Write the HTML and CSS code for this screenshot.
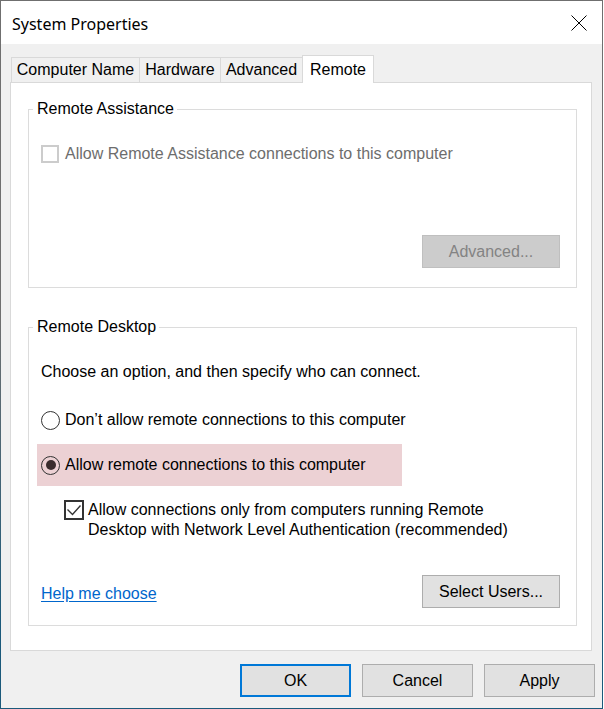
FILE: index.html
```html
<!DOCTYPE html>
<html lang="en">
<head>
<meta charset="utf-8">
<title>System Properties</title>
<link rel="stylesheet" href="styles.css">
</head>
<body>
<div class="window">
  <div class="titlebar">
    <span class="title">System Properties</span>
    <svg class="close" width="16" height="16" viewBox="0 0 16 16" aria-label="Close">
      <path d="M0.5 0.5 L15.5 15.5 M15.5 0.5 L0.5 15.5" stroke="#000" stroke-width="1" fill="none"/>
    </svg>
  </div>
  <div class="content">
    <div class="tabs">
      <div class="tab tab-name">Computer Name</div>
      <div class="tab tab-hw">Hardware</div>
      <div class="tab tab-adv">Advanced</div>
      <div class="tab tab-remote active">Remote</div>
    </div>
    <div class="panel">
      <fieldset class="group">
        <legend>Remote Assistance</legend>
        <div class="group-body assist-body">
          <div class="option disabled">
            <span class="checkbox"></span>
            <span>Allow Remote Assistance connections to this computer</span>
          </div>
          <div class="button-row advanced-row">
            <button class="btn btn-disabled" type="button">Advanced...</button>
          </div>
        </div>
      </fieldset>
      <fieldset class="group group-desktop">
        <legend>Remote Desktop</legend>
        <div class="group-body desktop-body">
          <div class="intro">Choose an option, and then specify who can connect.</div>
          <div class="option radio-row">
            <span class="radio"></span>
            <span>Don’t allow remote connections to this computer</span>
          </div>
          <div class="highlight">
            <div class="option">
              <span class="radio checked"></span>
              <span>Allow remote connections to this computer</span>
            </div>
          </div>
          <div class="option nla">
            <svg class="check" width="20" height="20" viewBox="0 0 20 20">
              <rect x="1" y="1" width="18" height="18" fill="#fff" stroke="#333" stroke-width="2"/>
              <path d="M3.5 9.5 L8.5 14.5 L16.5 5.5" fill="none" stroke="#333" stroke-width="1.4"/>
            </svg>
            <span class="nla-text">Allow connections only from computers running Remote<br>Desktop with Network Level Authentication (recommended)</span>
          </div>
          <div class="bottom-row">
            <a class="help" href="#">Help me choose</a>
            <button class="btn" type="button">Select Users...</button>
          </div>
        </div>
      </fieldset>
    </div>
    <div class="dialog-buttons">
      <button class="btn btn-dialog btn-default" type="button">OK</button>
      <button class="btn btn-dialog" type="button">Cancel</button>
      <button class="btn btn-dialog" type="button">Apply</button>
    </div>
  </div>
</div>
</body>
</html>
```
FILE: styles.css
```css
* { box-sizing: border-box; }

html, body {
  margin: 0;
  background: #ffffff;
}

body {
  font-family: "Liberation Sans", Arial, sans-serif;
  font-size: 16px;
  color: #000;
}

.window {
  width: 603px;
  height: 709px;
  border: 1px solid #707070;
  border-image: linear-gradient(to bottom, #6f6f6f 0%, #6f6f6f 45%, #1b5a7b 88%, #1b5a7b 100%) 1;
  background: #f0f0f0;
  display: flex;
  flex-direction: column;
}

.titlebar {
  height: 43px;
  background: #fff;
  display: flex;
  align-items: flex-start;
  justify-content: space-between;
  padding: 0 15px 0 11px;
}

.title {
  font-family: "Noto Sans", "Open Sans", sans-serif;
  font-size: 16px;
  line-height: 22px;
  margin-top: 12px;
  color: #000;
}

.close {
  display: block;
  margin-top: 14px;
}

.content {
  flex: 1;
  padding: 11px 10px 0 9px;
}

.tabs {
  display: flex;
  align-items: flex-end;
  margin-left: 1px;
}

.tab {
  height: 25px;
  line-height: 18px;
  border: 1px solid #d9d9d9;
  border-bottom: none;
  border-left: none;
  background: #f0f0f0;
  display: flex;
  align-items: center;
  justify-content: center;
  white-space: nowrap;
}

.tab-name { width: 129px; border-left: 1px solid #d9d9d9; }
.tab-hw { width: 81px; }
.tab-adv { width: 82px; }

.tab.active {
  width: 72px;
  height: 28px;
  margin-left: -1px;
  margin-bottom: -1px;
  border-left: 1px solid #d9d9d9;
  background: #fff;
  position: relative;
  z-index: 1;
}

.panel {
  width: 582px;
  background: #fff;
  border: 1px solid #d9d9d9;
  padding: 17px 14px 24px 17px;
}

.group {
  margin: 0;
  padding: 0;
  min-width: 0;
  border: 1px solid #dcdcdc;
}

.group legend {
  margin-left: 4px;
  padding: 0 3px 0 4px;
  line-height: 18px;
}

.group-desktop {
  margin-top: 30px;
}

.group-body {
  padding: 26px 16px 19px 12px;
}

.desktop-body {
  padding-bottom: 17px;
}

.option {
  display: flex;
  align-items: center;
  gap: 6px;
  line-height: 20px;
}

.option.disabled {
  color: #6d6d6d;
}

.checkbox {
  width: 18px;
  height: 18px;
  border: 2px solid #cccccc;
  background: #fff;
  flex: none;
}

.button-row {
  display: flex;
  justify-content: flex-end;
}

.advanced-row {
  margin-top: 71px;
}

.btn {
  font-family: "Liberation Sans", Arial, sans-serif;
  font-size: 16px;
  color: #000;
  height: 33px;
  width: 138px;
  background: #e1e1e1;
  border: 1px solid #adadad;
  border-radius: 0;
  padding: 0;
  margin: 0;
}

.btn-disabled {
  background: #cccccc;
  border-color: #bfbfbf;
  color: #838383;
}

.intro {
  line-height: 20px;
}

.radio-row {
  margin-top: 28px;
  gap: 5px;
}

.radio {
  width: 19px;
  height: 19px;
  border: 1.5px solid #333;
  border-radius: 50%;
  background: #fff;
  flex: none;
  display: flex;
  align-items: center;
  justify-content: center;
}

.radio.checked::after {
  content: "";
  width: 10px;
  height: 10px;
  border-radius: 50%;
  background: #3a2d2e;
}

.highlight {
  margin-top: 14px;
  margin-left: -4px;
  width: 365px;
  padding: 11px 4px;
  background: #ecd1d4;
}

.highlight .option {
  gap: 5px;
}

.highlight .radio {
  background: transparent;
}

.nla {
  margin-top: 14px;
  margin-left: 23px;
  align-items: flex-start;
  gap: 4px;
}

.check {
  display: block;
  flex: none;
  margin-top: 0;
}

.nla-text {
  line-height: 20px;
}

.bottom-row {
  margin-top: 35px;
  display: flex;
  align-items: center;
  justify-content: space-between;
}

.help {
  color: #0066cc;
  text-decoration: underline;
  text-underline-offset: 2px;
  margin-top: 5px;
  line-height: 20px;
}

.dialog-buttons {
  display: flex;
  justify-content: flex-end;
  gap: 11px;
  margin-top: 13px;
  margin-right: -3px;
}

.btn-dialog {
  width: 111px;
}

.btn-default {
  border: 2px solid #0078d7;
}
```
